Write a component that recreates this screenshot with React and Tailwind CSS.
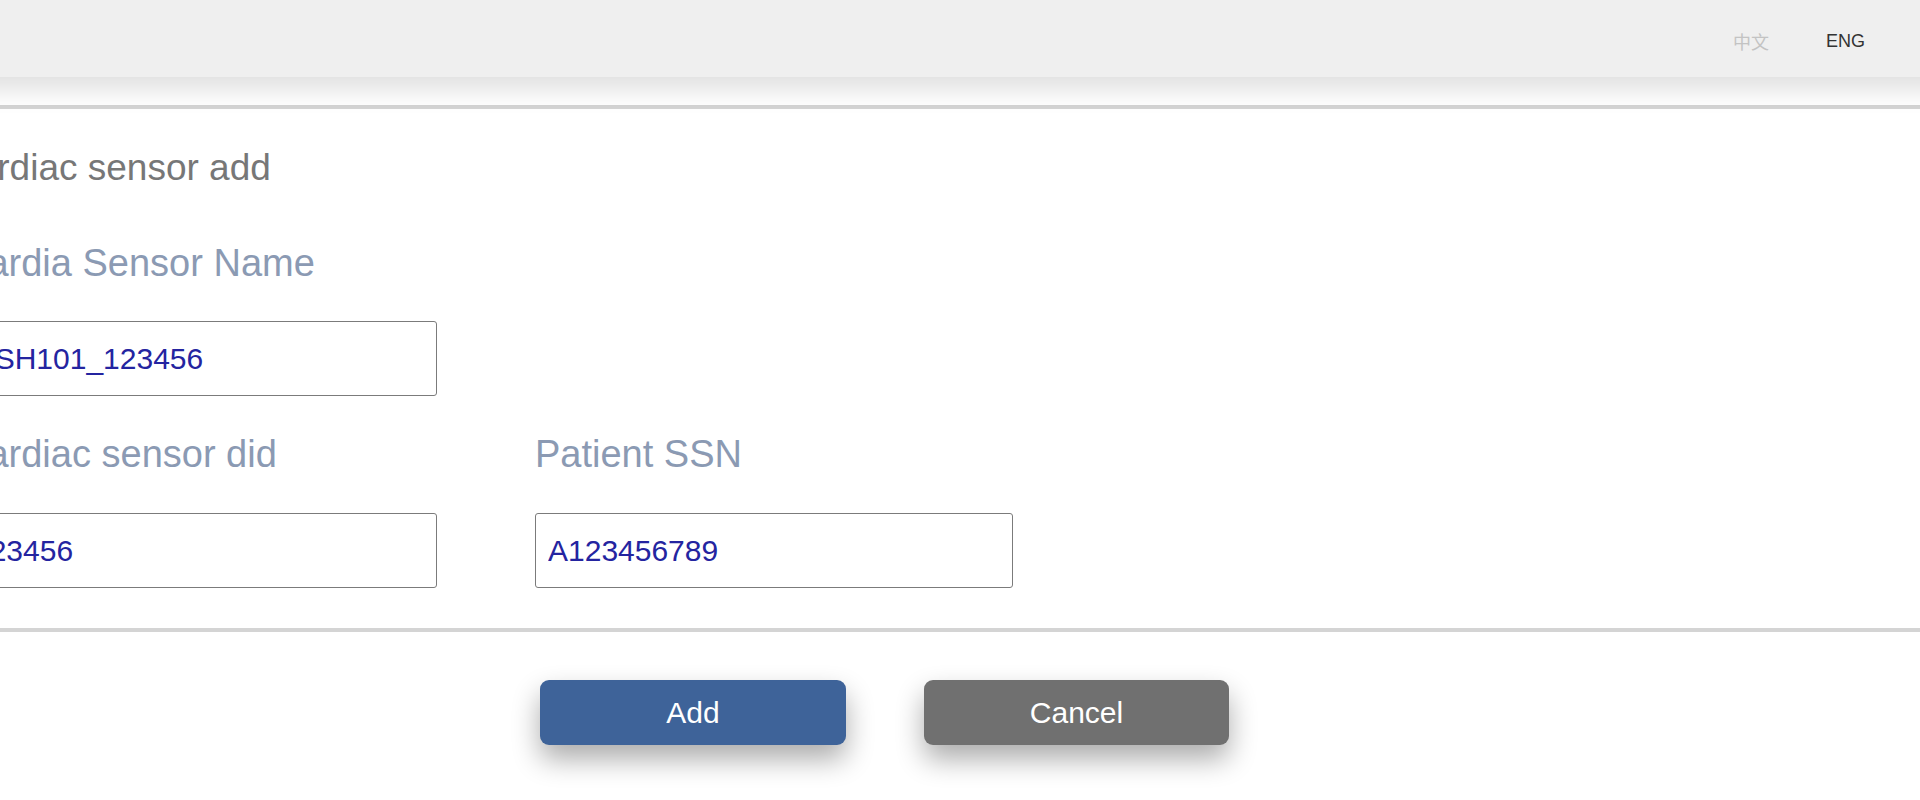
import React from "react";

export default function App() {
  return (
    <div className="min-h-[800px] w-full overflow-hidden bg-white font-['Liberation_Sans',Arial,sans-serif]">
      <header className="relative z-10 -mx-10 flex h-[77px] items-center justify-end bg-[#efefef] pr-[95px] pt-[5px] shadow-[0_12px_24px_rgba(0,0,0,0.13)]">
        <div className="flex items-center gap-[57px] text-[18px]">
          <span className="font-['Noto_Sans_CJK_SC',sans-serif] text-[#c3c3c3]">中文</span>
          <span className="text-[#333333]">ENG</span>
        </div>
      </header>

      <main className="mt-[28px] border-y-4 border-[#d4d4d4] bg-white">
        <div className="-ml-10 pt-[39px] pb-[40px]">
          <h1 className="-ml-[10px] h-[40px] text-[37px] leading-[40px] text-[#777777]">Cardiac sensor add</h1>

          <div className="mt-[53px] w-[477px]">
            <label className="block h-[44px] text-[38px] leading-[44px] text-[#8b9ab3]">Cardia Sensor Name</label>
            <input
              readOnly
              defaultValue="CSH101_123456"
              className="mt-[36px] block h-[75px] w-full rounded-[3px] border border-[#7b7b7b] bg-white px-3 text-[30px] text-[#2424a0] outline-none"
            />
          </div>

          <div className="mt-[36px] flex gap-[98px]">
            <div className="w-[477px]">
              <label className="block h-[44px] text-[38px] leading-[44px] text-[#8b9ab3]">Cardiac sensor did</label>
              <input
                readOnly
                defaultValue="123456"
                className="mt-[37px] block h-[75px] w-full rounded-[3px] border border-[#7b7b7b] bg-white px-3 text-[30px] text-[#2424a0] outline-none"
              />
            </div>
            <div className="w-[478px]">
              <label className="block h-[44px] text-[38px] leading-[44px] text-[#8b9ab3]">Patient SSN</label>
              <input
                readOnly
                defaultValue="A123456789"
                className="mt-[37px] block h-[75px] w-full rounded-[3px] border border-[#7b7b7b] bg-white px-3 text-[30px] text-[#2424a0] outline-none"
              />
            </div>
          </div>
        </div>
      </main>

      <div className="mt-[48px] flex gap-[78px] pl-[540px]">
        <button className="h-[65px] w-[306px] rounded-[9px] bg-[#3e6399] text-[30px] text-white shadow-[0_14px_28px_rgba(0,0,0,0.33)]">
          Add
        </button>
        <button className="h-[65px] w-[305px] rounded-[9px] bg-[#707070] text-[30px] text-white shadow-[0_14px_28px_rgba(0,0,0,0.33)]">
          Cancel
        </button>
      </div>
    </div>
  );
}
